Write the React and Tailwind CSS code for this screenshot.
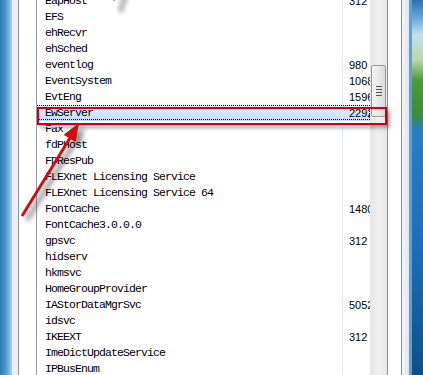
import React from 'react';

const rows = [
  ['EapHost', '312'],
  ['EFS'],
  ['ehRecvr'],
  ['ehSched'],
  ['eventlog', '980'],
  ['EventSystem', '1068'],
  ['EvtEng', '1596'],
  ['EwServer', '2292'],
  ['Fax'],
  ['fdPHost'],
  ['FDResPub'],
  ['FLEXnet Licensing Service'],
  ['FLEXnet Licensing Service 64'],
  ['FontCache', '1480'],
  ['FontCache3.0.0.0'],
  ['gpsvc', '312'],
  ['hidserv'],
  ['hkmsvc'],
  ['HomeGroupProvider'],
  ['IAStorDataMgrSvc', '5052'],
  ['idsvc'],
  ['IKEEXT', '312'],
  ['ImeDictUpdateService'],
  ['IPBusEnum'],
];

const SELECTED = 'EwServer';

const Row = ({ name, pid }) => {
  const sel = name === SELECTED;
  return (
    <div
      className={`relative flex h-[16px] shrink-0 items-center ${
        sel ? 'bg-gradient-to-b from-[#e6f1fd] to-[#c2dbfa]' : ''
      }`}
    >
      {sel && <div className="absolute inset-x-0 top-0 bottom-[1px] border border-dotted border-black" />}
      <div className="w-[306px] h-full shrink-0 pl-[8px] flex items-center border-r border-[#e2ecf8] whitespace-nowrap overflow-hidden font-['Liberation_Mono',monospace] text-[11.5px] tracking-[-0.9px] text-black">
        {name}
      </div>
      <div className="flex-1 h-full pl-[6px] flex items-center overflow-hidden whitespace-nowrap font-['Liberation_Sans',sans-serif] text-[11px] text-black">
        {pid}
      </div>
    </div>
  );
};

const Scrollbar = () => (
  <div className="w-[17px] shrink-0 flex flex-col bg-gradient-to-r from-[#e6e6e6] via-[#f0f0f0] to-[#e8e8e8]">
    <div className="h-[65px] shrink-0" />
    <div className="h-[52px] shrink-0 mx-px rounded-[2px] border border-[#9a9a9a] bg-gradient-to-r from-[#f6f6f6] to-[#dadada] flex flex-col items-center justify-center gap-[2px]">
      <div className="w-[6px] h-px bg-[#555]" />
      <div className="w-[6px] h-px bg-[#555]" />
      <div className="w-[6px] h-px bg-[#555]" />
      <div className="w-[6px] h-px bg-[#555]" />
    </div>
    <div className="flex-1" />
  </div>
);

const Arrow = () => (
  <svg className="absolute inset-0 pointer-events-none" width="423" height="375" viewBox="0 0 423 375">
    <defs>
      <filter id="blur" x="-50%" y="-50%" width="200%" height="200%">
        <feGaussianBlur stdDeviation="2.5" />
      </filter>
    </defs>
    <g filter="url(#blur)" opacity="0.45" transform="translate(5 4)">
      <line x1="22" y1="216" x2="70" y2="138" stroke="#000" strokeWidth="4" />
      <polygon points="79,123 75.6,142.1 63.6,134.7" fill="#000" />
    </g>
    <g filter="url(#blur)" opacity="0.35">
      <line x1="126" y1="-6" x2="120" y2="12" stroke="#000" strokeWidth="5" />
    </g>
    <line x1="116" y1="-4" x2="114" y2="1" stroke="#e08090" strokeWidth="2" />
    <line x1="22" y1="216" x2="70" y2="138" stroke="#cf0d0d" strokeWidth="3" />
    <polygon points="79,123 75.6,142.1 63.6,134.7" fill="#cf0d0d" />
  </svg>
);

export default function App() {
  return (
    <div className="relative w-[423px] h-[375px] overflow-hidden flex bg-white">
      {/* left window frame */}
      <div className="w-[12px] shrink-0 bg-gradient-to-r from-[#2c79ad] via-[#4f9bcf] to-[#a8d2ee]" />
      <div className="w-[6px] shrink-0 bg-[#eef1f4]" />
      <div className="w-px shrink-0 bg-[#8e8f94]" />
      <div className="w-[17px] shrink-0 bg-white" />
      <div className="w-px shrink-0 bg-[#9a9ba0]" />

      {/* list */}
      <div className="w-[333px] shrink-0 flex flex-col -mt-[7px]">
        {rows.map(([name, pid]) => (
          <Row key={name} name={name} pid={pid} />
        ))}
        <div className="flex-1 flex">
          <div className="w-[306px] border-r border-[#e2ecf8]" />
        </div>
      </div>

      <Scrollbar />

      {/* right frame */}
      <div className="w-px shrink-0 bg-[#8e8f94]" />
      <div className="w-[13px] shrink-0 bg-white" />
      <div className="w-px shrink-0 bg-[#8e8f94]" />
      <div className="w-[7px] shrink-0 bg-gradient-to-r from-[#f2f4f6] to-[#dfe7ef]" />
      <div className="w-[3px] shrink-0 bg-[#5aa3d8]" />
      <div className="w-[11px] shrink-0 bg-[linear-gradient(to_bottom,#2d70b2_0px,#6aa7d6_18px,#c4e0f0_35px,#b9d9a8_60px,#4f9a3a_80px,#3d8a3a_115px,#2a7cc2_130px,#1c6db5_250px,#0f4f88_375px)]" />

      {/* annotation box */}
      <div className="absolute left-[37px] top-[107px] w-[350px] h-[18px] border-2 border-[#c8000f] shadow-[3px_3px_4px_rgba(0,0,0,0.35)]" />
      <div className="absolute left-[38px] top-[126px] w-[332px] h-px bg-[#c5d9f1]" />
      <Arrow />
    </div>
  );
}
